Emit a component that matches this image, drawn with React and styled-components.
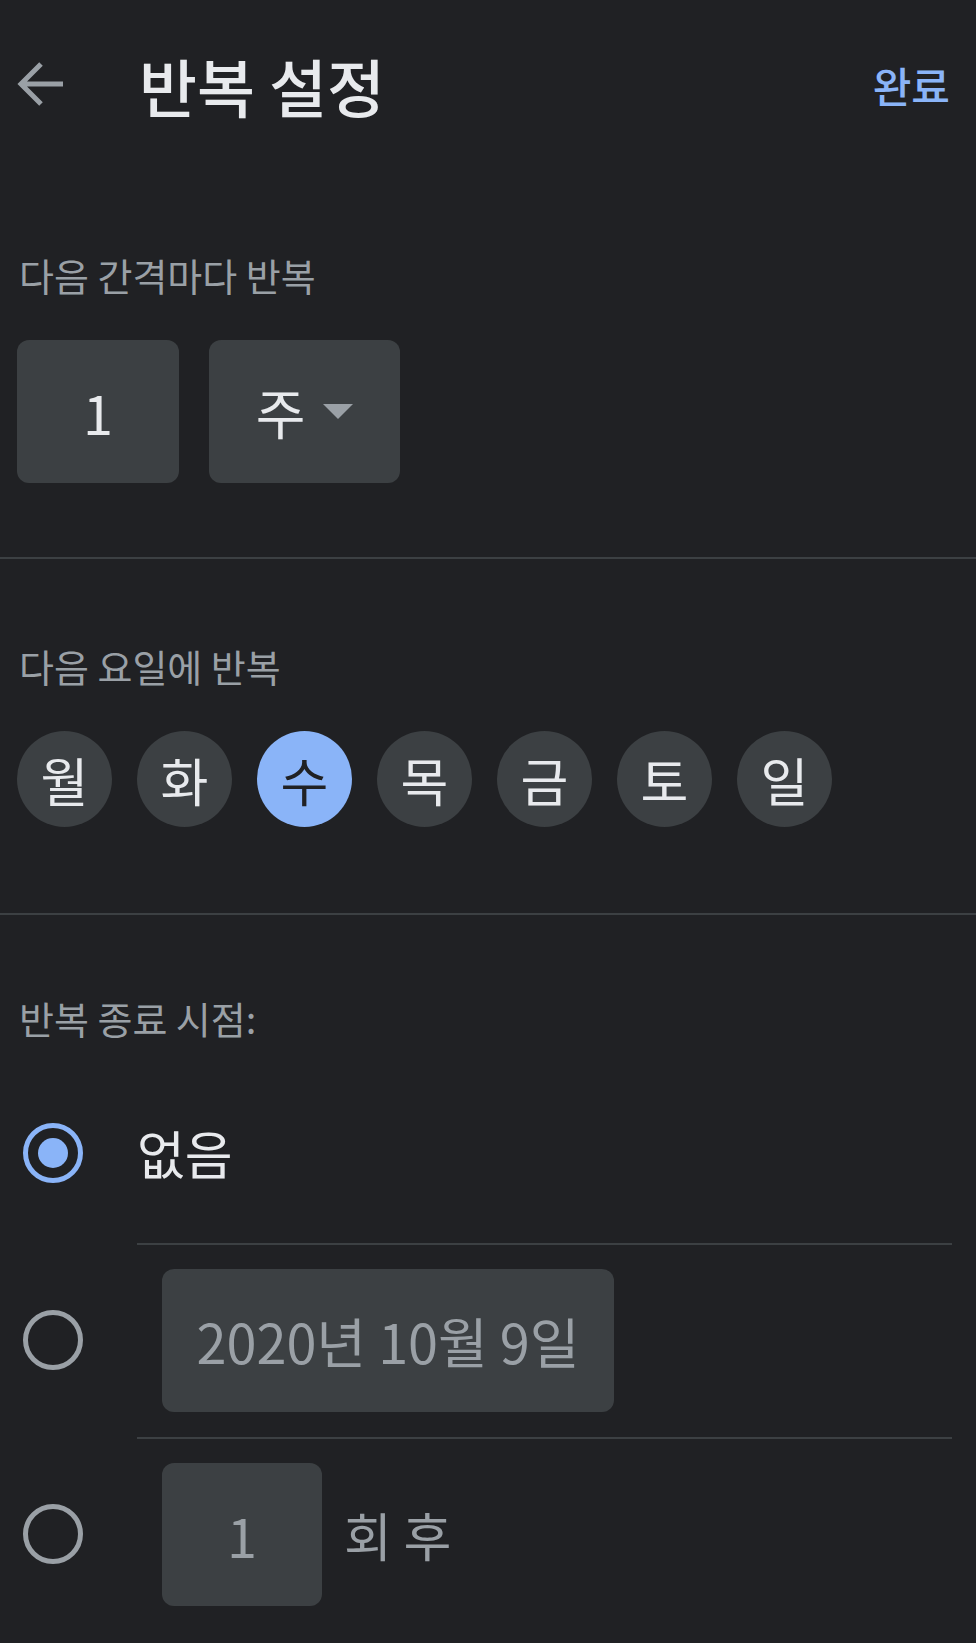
import React, { useState } from 'react'
import styled, { createGlobalStyle } from 'styled-components'

const GlobalStyle = createGlobalStyle`
  * { box-sizing: border-box; }
  body {
    margin: 0;
    background: #202124;
    font-family: "Noto Sans CJK KR", "Noto Sans", sans-serif;
  }
`

const Page = styled.div`
  min-height: 100vh;
  background: #202124;
  color: #e8eaed;
  padding-bottom: 36px;
`

const Header = styled.header`
  height: 168px;
  display: flex;
  align-items: center;
  padding: 0 26px 0 16px;
`

const BackButton = styled.button`
  width: 50px;
  height: 50px;
  padding: 0;
  border: none;
  background: none;
  display: flex;
  align-items: center;
  justify-content: center;
`

const Title = styled.h1`
  margin: 0 0 0 73px;
  flex: 1;
  font-size: 63px;
  font-weight: 500;
  color: #e8eaed;
  line-height: 1;
`

const Done = styled.button`
  border: none;
  background: none;
  padding: 0;
  font-family: inherit;
  font-size: 42px;
  font-weight: 500;
  color: #8ab4f8;
`

const Section = styled.section`
  padding: ${(p) => p.$top || 87}px 0 ${(p) => p.$bottom}px;
  border-bottom: ${(p) => (p.$last ? 'none' : '2px solid #3c4043')};
`

const Label = styled.div`
  padding: 0 19px;
  font-size: 38px;
  line-height: 40px;
  color: #9aa0a6;
  margin-bottom: ${(p) => p.$gap}px;
`

const BoxRow = styled.div`
  display: flex;
  gap: 30px;
  padding-left: 17px;
`

const Field = styled.div`
  width: ${(p) => p.$w}px;
  height: 143px;
  border-radius: 12px;
  background: #3c4043;
  display: flex;
  align-items: center;
  justify-content: center;
  font-size: ${(p) => p.$size || 54}px;
  color: ${(p) => (p.$muted ? '#9aa0a6' : '#e8eaed')};
  flex-shrink: 0;
`

const Caret = styled.span`
  width: 0;
  height: 0;
  margin-left: 18px;
  border-left: 15px solid transparent;
  border-right: 15px solid transparent;
  border-top: 15px solid #9aa0a6;
`

const DayRow = styled.div`
  display: flex;
  gap: 25px;
  padding-left: 17px;
`

const Day = styled.button`
  width: 95px;
  height: 96px;
  border-radius: 50%;
  border: none;
  padding: 0;
  font-family: inherit;
  font-size: 52px;
  background: ${(p) => (p.$on ? '#8ab4f8' : '#3c4043')};
  color: ${(p) => (p.$on ? '#202124' : '#e8eaed')};
  display: flex;
  align-items: center;
  justify-content: center;
`

const OptionRow = styled.div`
  display: flex;
  align-items: stretch;
`

const RadioCell = styled.div`
  width: 137px;
  flex-shrink: 0;
  display: flex;
  align-items: center;
  padding: ${(p) => (p.$first ? '33px 0 19px 23px' : '24px 0 25px 23px')};
`

const Radio = styled.span`
  width: 60px;
  height: 60px;
  border-radius: 50%;
  border: 5px solid ${(p) => (p.$on ? '#8ab4f8' : '#9aa0a6')};
  display: flex;
  align-items: center;
  justify-content: center;
  &::after {
    content: '';
    width: 30px;
    height: 30px;
    border-radius: 50%;
    background: #8ab4f8;
    display: ${(p) => (p.$on ? 'block' : 'none')};
  }
`

const OptionBody = styled.div`
  flex: 1;
  min-height: ${(p) => (p.$divided ? 192 : 195)}px;
  margin-right: 24px;
  padding: ${(p) => (p.$divided ? '24px 0 25px' : '33px 0 19px')};
  display: flex;
  align-items: center;
  border-top: ${(p) => (p.$divided ? '2px solid #3c4043' : 'none')};
`

const OptionText = styled.span`
  font-size: 52px;
  color: #e8eaed;
`

const Suffix = styled.span`
  margin-left: 22px;
  font-size: 52px;
  color: #9aa0a6;
`

const Indent = styled.div`
  margin-left: 25px;
  display: flex;
  align-items: center;
`

const days = ['월', '화', '수', '목', '금', '토', '일']

export default function App() {
  const [day, setDay] = useState(2)
  const [end, setEnd] = useState(0)

  return (
    <Page>
      <GlobalStyle />
      <Header>
        <BackButton aria-label="뒤로">
          <svg width="50" height="50" viewBox="0 0 50 50" fill="none">
            <path d="M47 25H6M25 5L5 25l20 20" stroke="#9aa0a6" strokeWidth="5" />
          </svg>
        </BackButton>
        <Title>반복 설정</Title>
        <Done>완료</Done>
      </Header>

      <Section $bottom={74}>
        <Label $gap={45}>다음 간격마다 반복</Label>
        <BoxRow>
          <Field $w={162}>1</Field>
          <Field $w={191}>
            주<Caret />
          </Field>
        </BoxRow>
      </Section>

      <Section $bottom={86}>
        <Label $gap={45}>다음 요일에 반복</Label>
        <DayRow>
          {days.map((d, i) => (
            <Day key={d} $on={i === day} onClick={() => setDay(i)}>
              {d}
            </Day>
          ))}
        </DayRow>
      </Section>

      <Section $top={83} $bottom={0} $last>
        <Label $gap={10}>반복 종료 시점:</Label>

        <OptionRow onClick={() => setEnd(0)}>
          <RadioCell $first>
            <Radio $on={end === 0} />
          </RadioCell>
          <OptionBody>
            <OptionText>없음</OptionText>
          </OptionBody>
        </OptionRow>

        <OptionRow onClick={() => setEnd(1)}>
          <RadioCell>
            <Radio $on={end === 1} />
          </RadioCell>
          <OptionBody $divided>
            <Indent>
              <Field $w={452} $size={54} $muted>
                2020년 10월 9일
              </Field>
            </Indent>
          </OptionBody>
        </OptionRow>

        <OptionRow onClick={() => setEnd(2)}>
          <RadioCell>
            <Radio $on={end === 2} />
          </RadioCell>
          <OptionBody $divided>
            <Indent>
              <Field $w={160} $muted>
                1
              </Field>
              <Suffix>회 후</Suffix>
            </Indent>
          </OptionBody>
        </OptionRow>
      </Section>
    </Page>
  )
}
